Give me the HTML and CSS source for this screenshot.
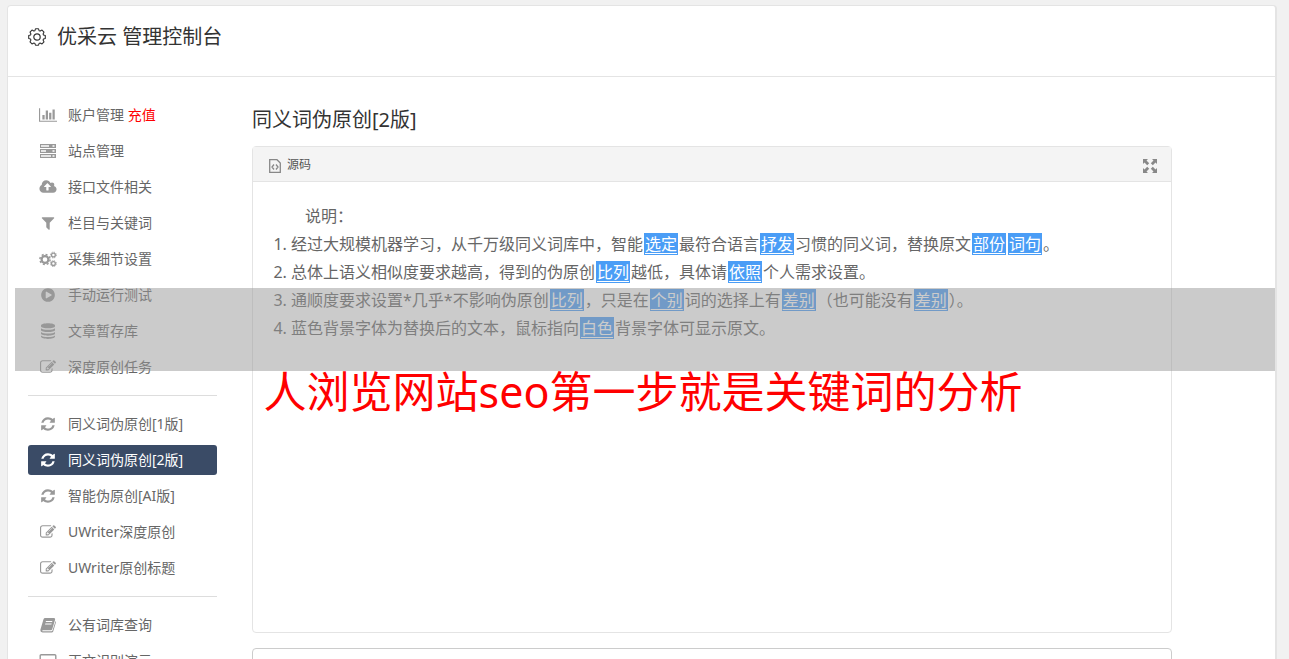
FILE: index.html
```html
<!DOCTYPE html>
<html lang="zh-CN">
<head>
<meta charset="utf-8">
<title>优采云 管理控制台</title>
<link rel="stylesheet" href="styles.css">
</head>
<body>
<svg class="sprite" aria-hidden="true">
  <symbol id="refresh" viewBox="0 0 1792 1792"><path d="M1639 1056q0 5-1 7-64 268-268 434.5t-478 166.5q-146 0-282.5-55t-243.5-157l-129 129q-19 19-45 19t-45-19-19-45v-448q0-26 19-45t45-19h448q26 0 45 19t19 45-19 45l-137 137q71 66 161 102t187 36q134 0 250-65t186-179q11-17 53-117 8-23 30-23h192q13 0 22.5 9.5t9.5 22.5zm25-800v448q0 26-19 45t-45 19h-448q-26 0-45-19t-19-45 19-45l138-138q-148-137-349-137-134 0-250 65t-186 179q-11 17-53 117-8 23-30 23h-199q-13 0-22.5-9.5t-9.5-22.5v-7q65-268 270-434.5t480-166.5q146 0 284 55.5t245 156.5l130-129q19-19 45-19t45 19 19 45z"/></symbol>
  <symbol id="edit" viewBox="0 0 1792 1792"><path d="M888 1184l116-116-152-152-116 116v56h96v96h56zm440-720q-16-16-33 1l-350 350q-17 17-1 33t33-1l350-350q17-17 1-33zm80 594v190q0 119-84.5 203.5t-203.5 84.5h-832q-119 0-203.5-84.5t-84.5-203.5v-832q0-119 84.5-203.5t203.5-84.5h832q63 0 117 25 15 7 18 23 3 17-9 29l-49 49q-14 14-32 8-23-6-45-6h-832q-66 0-113 47t-47 113v832q0 66 47 113t113 47h832q66 0 113-47t47-113v-126q0-13 9-22l64-64q15-15 35-7t20 29zm-96-738l288 288-672 672h-288v-288zm444 132l-92 92-288-288 92-92q28-28 68-28t68 28l152 152q28 28 28 68t-28 68z"/></symbol>
  <symbol id="gear" viewBox="0 0 18 18"><path fill="none" stroke="currentColor" stroke-width="1.100" stroke-linejoin="round" d="M7.500.800h3l.6 1.900 1 .4 1.900-1 2 2-.9 1.900.4 1 1.800.6v2.800l-1.800.6-.4 1 .9 1.900-2 2-1.900-.9-1 .4-.6 1.800h-3l-.6-1.800-1-.4-1.900.9-2-2 .9-1.900-.4-1-1.800-.6V7.600L2.500 7l.4-1L2 4.100l2-2 1.900 1 1-.4z"/><circle cx="9" cy="9" r="3.200" fill="none" stroke="currentColor" stroke-width="1.200"/></symbol>
</svg>

<div class="console">
  <header class="topbar">
    <svg class="gear"><use href="#gear"/></svg>
    <h1>优采云 管理控制台</h1>
  </header>
  <div class="layout">
    <nav class="side">
      <ul>
        <li><a href="#account"><svg viewBox="0 0 2048 1792"><path d="M640 896v512h-256v-512h256zm384-512v1024h-256v-1024h256zm1024 1152v128h-2048v-1536h128v1408h1920zm-640-896v768h-256v-768h256zm384-384v1152h-256v-1152h256z"/></svg><span>账户管理 <em>充值</em></span></a></li>
        <li><a href="#sites"><svg viewBox="0 0 18 16"><path fill-rule="evenodd" d="M1 1h16v4H1zM2 2.200v1.600h8V2.200zM13.500 2.200v1.600h2V2.200zM1 6h16v4H1zM2 7.200v1.600h5V7.200zM13.500 7.200v1.600h2V7.200zM1 11h16v4H1zM2 12.200v1.600h10v-1.600zM13.500 12.200v1.600h2v-1.600z"/></svg><span>站点管理</span></a></li>
        <li><a href="#files"><svg viewBox="0 0 1920 1792"><path d="M1280 864q0-14-9-23l-352-352q-9-9-23-9t-23 9l-351 351q-10 12-10 24 0 14 9 23t23 9h224v352q0 13 9.500 22.500t22.500 9.500h192q13 0 22.500-9.500t9.500-22.500v-352h224q13 0 22.500-9.500t9.500-22.500zm640 288q0 159-112.500 271.500t-271.500 112.500h-1088q-185 0-316.500-131.500t-131.500-316.500q0-130 70-240t188-165q-2-30-2-43 0-212 150-362t362-150q156 0 285.500 87t188.500 231q71-62 166-62 106 0 181 75t75 181q0 76-41 138 130 31 213.500 135.500t83.500 238.500z"/></svg><span>接口文件相关</span></a></li>
        <li><a href="#keywords"><svg viewBox="0 0 1792 1792"><path d="M1595 295q17 41-14 70l-493 493v742q0 42-39 59-13 5-25 5-27 0-45-19l-256-256q-19-19-19-45v-486l-493-493q-31-29-14-70 17-39 59-39h1280q42 0 59 39z"/></svg><span>栏目与关键词</span></a></li>
        <li><a href="#collect"><svg viewBox="0 0 18 16"><g fill="none" stroke="currentColor"><circle cx="6" cy="8.500" r="3.400" stroke-width="2.200"/><circle cx="6" cy="8.500" r="5.100" stroke-width="1.500" stroke-dasharray="2 2"/><circle cx="14.400" cy="4" r="1.900" stroke-width="1.300"/><circle cx="14.400" cy="4" r="2.900" stroke-width="1" stroke-dasharray="1.200 1.080"/><circle cx="14.400" cy="12.600" r="1.900" stroke-width="1.300"/><circle cx="14.400" cy="12.600" r="2.900" stroke-width="1" stroke-dasharray="1.200 1.080"/></g></svg><span>采集细节设置</span></a></li>
        <li><a href="#run"><svg viewBox="0 0 1792 1792"><path d="M896 128q209 0 385.500 103t279.500 279.500 103 385.500-103 385.500-279.500 279.500-385.500 103-385.500-103-279.500-279.500-103-385.500 103-385.500 279.500-279.500 385.500-103zm384 823q32-18 32-55t-32-55l-544-320q-31-19-64-1-32 19-32 56v640q0 37 32 56 16 8 32 8 17 0 32-9z"/></svg><span>手动运行测试</span></a></li>
        <li><a href="#articles"><svg viewBox="0 0 16 16"><path d="M1 2.500C1-.5 15-.5 15 2.500V3.200C15 6 1 6 1 3.200zM1 5.200c2 2 12 2 14 0v1.700c0 2.800-14 2.800-14 0zM1 8.900c2 2 12 2 14 0v1.700c0 2.800-14 2.800-14 0zM1 12.600c2 2 12 2 14 0v1c0 3.200-14 3.200-14 0z"/></svg><span>文章暂存库</span></a></li>
        <li><a href="#tasks"><svg><use href="#edit"/></svg><span>深度原创任务</span></a></li>
      </ul>
      <ul>
        <li><a href="#syn1"><svg><use href="#refresh"/></svg><span>同义词伪原创[1版]</span></a></li>
        <li><a class="active" href="#syn2" aria-current="page"><svg><use href="#refresh"/></svg><span>同义词伪原创[2版]</span></a></li>
        <li><a href="#ai"><svg><use href="#refresh"/></svg><span>智能伪原创[AI版]</span></a></li>
        <li><a href="#uwriter"><svg><use href="#edit"/></svg><span>UWriter深度原创</span></a></li>
        <li><a href="#uwriter-title"><svg><use href="#edit"/></svg><span>UWriter原创标题</span></a></li>
      </ul>
      <ul>
        <li><a href="#lexicon"><svg viewBox="0 0 16 16"><path fill-rule="evenodd" d="M5.200 1H14q1.500.2 1.100 1.700L12.300 12q-.4 1.200-1.600 1.200H3q-.8 0-.8.5 0 .6.9.6h8.300q.8 0 1.100-.8L15.600 4q.6.500.3 1.500l-2.700 9q-.4 1-1.500 1H2.600Q.2 15.400.3 13L3.500 2.300Q3.900 1.100 5.200 1zM6 4l-.3 1h6.400l.3-1zM5.300 6.400l-.3 1h6.400l.3-1z"/></svg><span>公有词库查询</span></a></li>
        <li><a href="#demo"><svg viewBox="0 0 18 16"><path fill="none" stroke="currentColor" stroke-width="1.400" d="M2.200 1.700h13.600q1 0 1 1v8.600q0 1-1 1H2.200q-1 0-1-1V2.700q0-1 1-1zM5 15h8M9 12v3"/></svg><span>正文识别演示</span></a></li>
      </ul>
    </nav>
    <main>
      <h2>同义词伪原创[2版]</h2>
      <section class="editor">
        <div class="toolbar">
          <button type="button"><svg width="12" height="14" viewBox="0 0 12 14"><path fill="none" stroke="currentColor" stroke-width="1.300" d="M.7.700h7.300l3.300 3.300v9.300H.7zM5 5.500 3 8l2 2.500M7 5.500 9 8l-2 2.500"/></svg><span>源码</span></button>
          <button type="button" aria-label="全屏"><svg width="14" height="14" viewBox="0 0 14 14"><path d="M0 0h5L3.500 1.500 6.200 4.200 4.200 6.200 1.500 3.500 0 5zM14 0v5l-1.500-1.500-2.700 2.700-2-2 2.700-2.700L9 0zM0 14V9l1.500 1.500 2.700-2.700 2 2-2.700 2.700L5 14zM14 14H9l1.500-1.500-2.700-2.700 2-2 2.700 2.700L14 9z"/></svg></button>
        </div>
        <div class="text">
          <p>说明：</p>
          <ol>
            <li>经过大规模机器学习，从千万级同义词库中，智能<a href="#w1">选定</a>最符合语言<a href="#w2">抒发</a>习惯的同义词，替换原文<a href="#w3">部份</a><a href="#w4">词句</a>。</li>
            <li>总体上语义相似度要求越高，得到的伪原创<a href="#w5">比列</a>越低，具体请<a href="#w6">依照</a>个人需求设置。</li>
            <li>通顺度要求设置*几乎*不影响伪原创<a href="#w7">比列</a>，只是在<a href="#w8">个别</a>词的选择上有<a href="#w9">差别</a>（也可能没有<a href="#w10">差别</a>）。</li>
            <li>蓝色背景字体为替换后的文本，鼠标指向<a href="#w11">白色</a>背景字体可显示原文。</li>
          </ol>
        </div>
      </section>
      <section class="result"></section>
    </main>
  </div>
</div>
<div class="caption"><div class="band"></div><p>人浏览网站seo第一步就是关键词的分析</p></div>
</body>
</html>
```
FILE: styles.css
```css
* { box-sizing: border-box; }
html { height: 100%; overflow: hidden; }
body {
  margin: 0;
  padding: 5px 12px 0 7px;
  background: #f1f1f1;
  color: #666;
  font-family: "Noto Sans", "Noto Sans CJK SC", sans-serif;
  font-size: 14px;
  font-weight: 400;
}
h1, h2, p, ul, ol { margin: 0; padding: 0; font-weight: 400; }
a { color: inherit; text-decoration: none; }
.sprite { display: none; }
svg { flex: none; fill: currentColor; }

.console {
  min-height: 700px;
  background: #fff;
  border: 1px solid #e4e4e4;
  border-right-width: 2px;
  border-radius: 4px;
}
.topbar {
  display: flex;
  align-items: center;
  gap: 11px;
  padding: 16px 20px 24px;
  border-bottom: 1px solid #e4e4e4;
  color: #333;
}
.topbar h1 { font-size: 20px; line-height: 30px; }
.gear { width: 18px; height: 18px; }

.layout { display: flex; gap: 35px; padding: 23px 103px 0 20px; }
.side { flex: 0 0 189px; }
.side ul { display: grid; gap: 6px; list-style: none; }
.side ul + ul { margin-top: 13px; padding-top: 13px; border-top: 1px solid #ddd; }
.side a {
  display: flex;
  align-items: center;
  gap: 11px;
  height: 30px;
  padding: 0 11px;
  border-radius: 3px;
  line-height: 30px;
  white-space: nowrap;
}
.side svg { width: 18px; height: 16px; color: #999; }
.side em { color: #f00; font-style: normal; }
.side .active { background: #3a4b66; color: #fff; }
.side .active svg { color: #fff; }

main { flex: 1; min-width: 0; padding-top: 5px; }
main h2 { color: #333; font-size: 20px; line-height: 30px; }
.editor {
  min-height: 487px;
  margin-top: 11px;
  border: 1px solid #e4e4e4;
  border-radius: 4px;
}
.toolbar {
  display: flex;
  justify-content: space-between;
  height: 35px;
  padding: 0 14px 0 16px;
  background: #f4f4f4;
  border-bottom: 1px solid #e4e4e4;
}
.toolbar button {
  display: flex;
  align-items: center;
  gap: 6px;
  padding: 3px 0 0;
  border: 0;
  background: none;
  color: #555;
  font: inherit;
  font-size: 12px;
}
.toolbar svg { color: #888; }
.toolbar span { padding-bottom: 3px; }
.text { padding: 20px; font-size: 16px; line-height: 28px; }
.text p { text-indent: 2em; }
.text ol { padding-left: 18px; }
.text a {
  margin: 0 1px;
  padding: 0 1px;
  background: #4a9df6;
  color: #fff;
  text-decoration: underline;
  text-underline-offset: 3px;
}
.result {
  height: 160px;
  margin-top: 15px;
  border: 1px solid #ccc;
  border-radius: 4px;
}

.caption {
  position: absolute;
  top: 288px;
  left: 15px;
  right: 14px;
  pointer-events: none;
}
.band { height: 83px; background: rgba(151, 151, 151, .5); }
.caption p {
  padding-right: 4px;
  color: #f00;
  font-size: 43px;
  line-height: 42px;
  text-align: center;
}
```
